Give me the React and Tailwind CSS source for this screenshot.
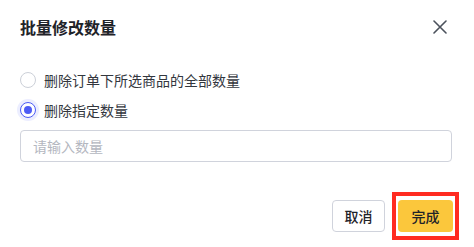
import React from "react";

export default function App() {
  return (
    <div className="w-[474px] h-[247px] bg-white font-['Noto_Sans_CJK_SC','Noto_Sans',sans-serif] text-[#1f2329]">
      <div className="flex items-center justify-between pl-5 pr-[27px] pt-[15px]">
        <div className="text-[16px] leading-6 font-semibold text-[#1f2329]">批量修改数量</div>
        <svg width="14" height="14" viewBox="0 0 14 14" className="block">
          <path d="M1 1L13 13M13 1L1 13" stroke="#4b515c" strokeWidth="1.6" strokeLinecap="round" />
        </svg>
      </div>
      <div className="px-5 pt-[26px]">
        <div className="flex items-center gap-2 h-[30px]">
          <span className="shrink-0 w-4 h-4 rounded-full border border-[#ccd0d8] bg-white"></span>
          <span className="text-[14px] leading-5 text-[#33373e]">删除订单下所选商品的全部数量</span>
        </div>
        <div className="flex items-center gap-2 h-[30px]">
          <span className="shrink-0 w-4 h-4 rounded-full border-[1.5px] border-[#4d5cf5] bg-white flex items-center justify-center shadow-[0_0_0_3px_#eceeff]">
            <span className="w-2 h-2 rounded-full bg-[#4d5cf5]"></span>
          </span>
          <span className="text-[14px] leading-5 text-[#33373e]">删除指定数量</span>
        </div>
        <div className="mt-[5px] w-[432px] h-8 border border-[#d0d3dc] rounded-[4px] flex items-center px-3">
          <span className="text-[14px] text-[#b4b7bf]">请输入数量</span>
        </div>
      </div>
      <div className="flex items-center justify-end pr-[15px] mt-[30px] gap-[7px]">
        <button className="h-8 w-[53px] border border-[#d0d3dc] rounded-[4px] bg-white text-[14px] font-medium text-[#1f2329] flex items-center justify-center">
          取消
        </button>
        <div className="border-4 border-[#ff2b21] px-[2px] py-1">
          <button className="h-8 w-[55px] rounded-[4px] bg-[#fbc73c] text-[14px] font-medium text-[#1f2329] flex items-center justify-center">
            完成
          </button>
        </div>
      </div>
    </div>
  );
}
